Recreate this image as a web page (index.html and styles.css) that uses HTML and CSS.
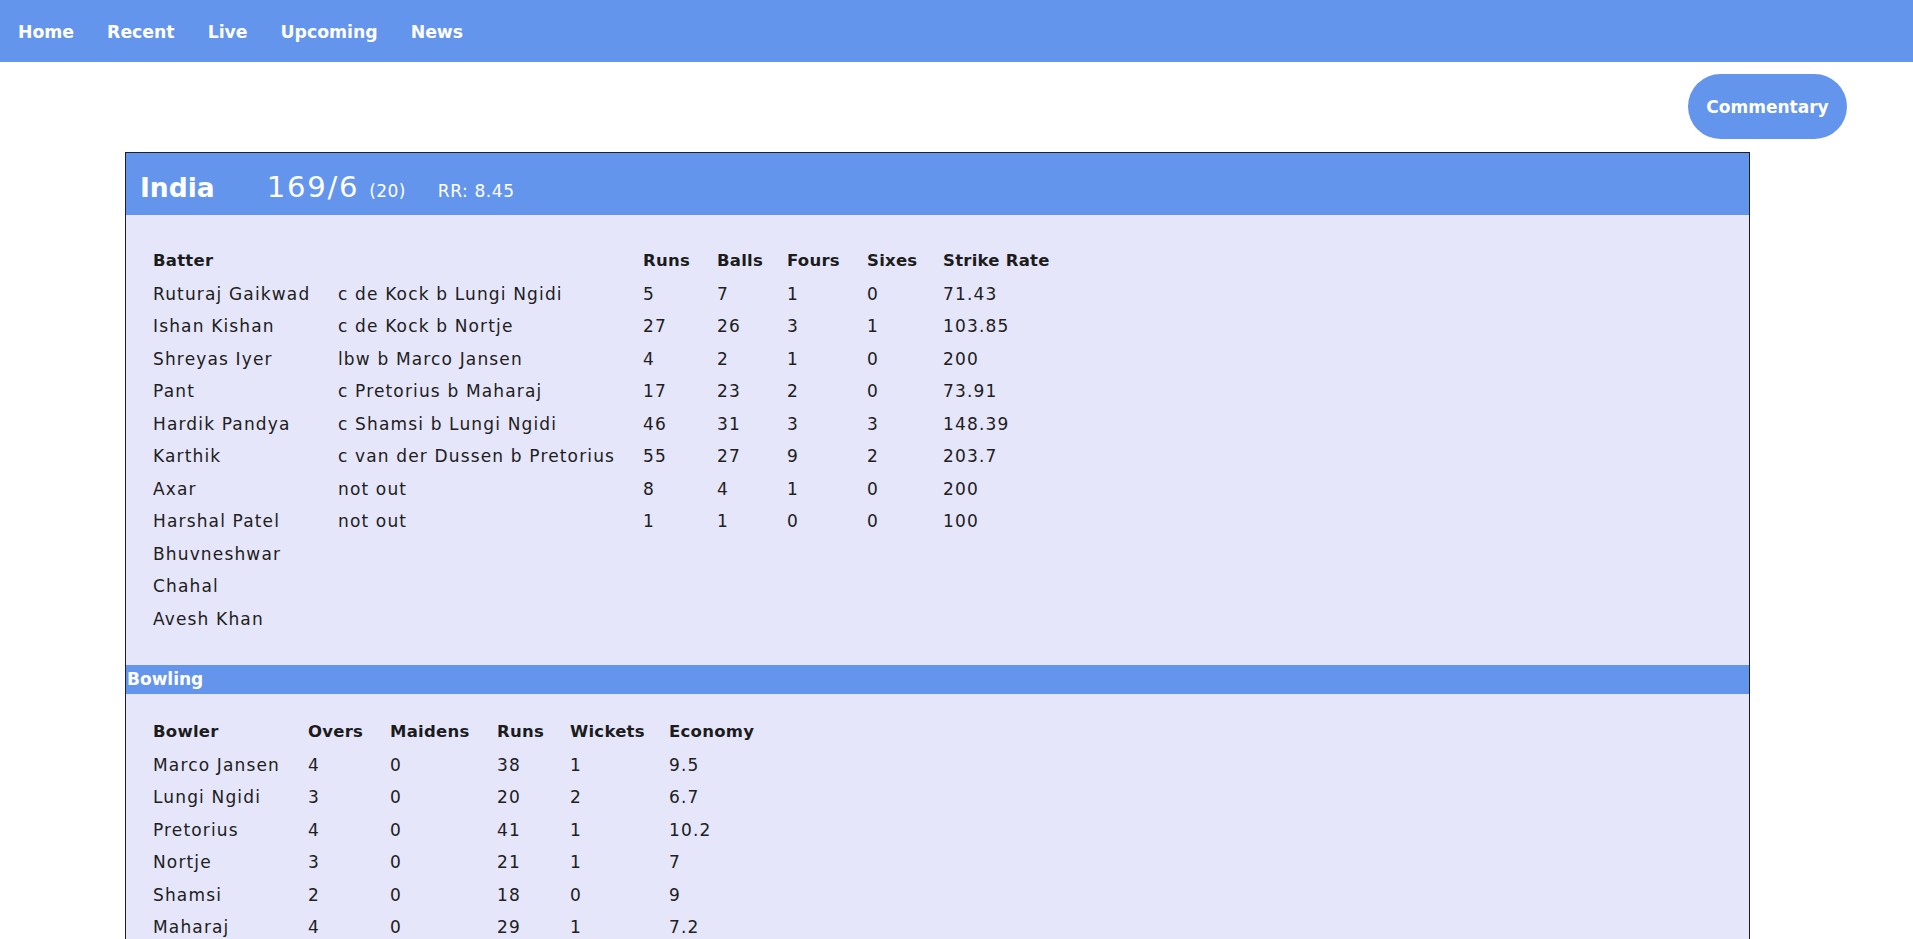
FILE: index.html
```html
<!DOCTYPE html>
<html>
<head>
<meta charset="utf-8">
<title>Scorecard</title>
<link rel="stylesheet" href="styles.css">
</head>
<body>
<nav class="nav">
  <a class="nav-link" href="#">Home</a>
  <a class="nav-link" href="#">Recent</a>
  <a class="nav-link" href="#">Live</a>
  <a class="nav-link" href="#">Upcoming</a>
  <a class="nav-link" href="#">News</a>
</nav>
<div class="actions">
  <button class="commentary-btn">Commentary</button>
</div>
<section class="card">
  <header class="card-head">
    <span class="team">India</span>
    <span class="score">169/6</span>
    <span class="overs">(20)</span>
    <span class="rr">RR: 8.45</span>
  </header>
  <div class="batting">
    <table class="stats bat">
      <colgroup>
        <col class="c-name"><col class="c-dis"><col class="c-runs"><col class="c-balls"><col class="c-fours"><col class="c-sixes"><col class="c-sr">
      </colgroup>
      <thead>
        <tr><th>Batter</th><th></th><th>Runs</th><th>Balls</th><th>Fours</th><th>Sixes</th><th>Strike Rate</th></tr>
      </thead>
      <tbody>
        <tr><td>Ruturaj Gaikwad</td><td>c de Kock b Lungi Ngidi</td><td>5</td><td>7</td><td>1</td><td>0</td><td>71.43</td></tr>
        <tr><td>Ishan Kishan</td><td>c de Kock b Nortje</td><td>27</td><td>26</td><td>3</td><td>1</td><td>103.85</td></tr>
        <tr><td>Shreyas Iyer</td><td>lbw b Marco Jansen</td><td>4</td><td>2</td><td>1</td><td>0</td><td>200</td></tr>
        <tr><td>Pant</td><td>c Pretorius b Maharaj</td><td>17</td><td>23</td><td>2</td><td>0</td><td>73.91</td></tr>
        <tr><td>Hardik Pandya</td><td>c Shamsi b Lungi Ngidi</td><td>46</td><td>31</td><td>3</td><td>3</td><td>148.39</td></tr>
        <tr><td>Karthik</td><td>c van der Dussen b Pretorius</td><td>55</td><td>27</td><td>9</td><td>2</td><td>203.7</td></tr>
        <tr><td>Axar</td><td>not out</td><td>8</td><td>4</td><td>1</td><td>0</td><td>200</td></tr>
        <tr><td>Harshal Patel</td><td>not out</td><td>1</td><td>1</td><td>0</td><td>0</td><td>100</td></tr>
        <tr><td>Bhuvneshwar</td><td></td><td></td><td></td><td></td><td></td><td></td></tr>
        <tr><td>Chahal</td><td></td><td></td><td></td><td></td><td></td><td></td></tr>
        <tr><td>Avesh Khan</td><td></td><td></td><td></td><td></td><td></td><td></td></tr>
      </tbody>
    </table>
  </div>
  <div class="band">Bowling</div>
  <div class="bowling">
    <table class="stats bowl">
      <colgroup>
        <col class="b-name"><col class="b-overs"><col class="b-maidens"><col class="b-runs"><col class="b-wkts"><col class="b-eco">
      </colgroup>
      <thead>
        <tr><th>Bowler</th><th>Overs</th><th>Maidens</th><th>Runs</th><th>Wickets</th><th>Economy</th></tr>
      </thead>
      <tbody>
        <tr><td>Marco Jansen</td><td>4</td><td>0</td><td>38</td><td>1</td><td>9.5</td></tr>
        <tr><td>Lungi Ngidi</td><td>3</td><td>0</td><td>20</td><td>2</td><td>6.7</td></tr>
        <tr><td>Pretorius</td><td>4</td><td>0</td><td>41</td><td>1</td><td>10.2</td></tr>
        <tr><td>Nortje</td><td>3</td><td>0</td><td>21</td><td>1</td><td>7</td></tr>
        <tr><td>Shamsi</td><td>2</td><td>0</td><td>18</td><td>0</td><td>9</td></tr>
        <tr><td>Maharaj</td><td>4</td><td>0</td><td>29</td><td>1</td><td>7.2</td></tr>
      </tbody>
    </table>
  </div>
</section>
</body>
</html>
```

FILE: styles.css
```css
* { box-sizing: border-box; }

body {
  margin: 0;
  background: #ffffff;
  font-family: "DejaVu Sans", Verdana, sans-serif;
  color: #1c1c1c;
}

.nav {
  display: flex;
  align-items: center;
  gap: 33px;
  height: 62px;
  padding: 1px 0 0 18px;
  background: #6495ed;
}

.nav-link {
  color: #ffffff;
  text-decoration: none;
  font-weight: bold;
  font-size: 17.3px;
}

.actions {
  display: flex;
  justify-content: flex-end;
  padding: 12px 66px 13px 0;
}

.commentary-btn {
  width: 159px;
  height: 65px;
  border: none;
  border-radius: 33px;
  background: #6495ed;
  color: #ffffff;
  font-family: "DejaVu Sans", Verdana, sans-serif;
  font-weight: bold;
  font-size: 17px;
  padding: 0;
}

.card {
  margin-left: 125px;
  width: 1625px;
  border: 1px solid #1e1e2a;
  background: #e6e6fa;
}

.card-head {
  display: flex;
  align-items: baseline;
  height: 62px;
  padding: 17px 0 0 14px;
  background: #6495ed;
  color: #ffffff;
}

.team {
  font-weight: bold;
  font-size: 26.5px;
  margin-right: 52px;
}

.score {
  font-size: 29px;
  letter-spacing: 1.8px;
  margin-right: 10px;
}

.overs {
  font-size: 17px;
  letter-spacing: 0.4px;
  margin-right: 32px;
}

.rr {
  font-size: 17px;
  letter-spacing: 0.6px;
}

.batting {
  padding: 30px 0 30px 27px;
}

.bowling {
  padding: 22px 0 0 27px;
}

.stats {
  border-collapse: collapse;
  table-layout: fixed;
}

.stats th,
.stats td {
  padding: 6px 0;
  line-height: 20.5px;
  text-align: left;
  white-space: nowrap;
}

.stats th {
  font-weight: bold;
  font-size: 16.5px;
  letter-spacing: 0.25px;
}

.stats td {
  font-size: 17px;
  letter-spacing: 1.15px;
  color: #202020;
}

.bat { width: 890px; }
.c-name { width: 185px; }
.c-dis { width: 305px; }
.c-runs { width: 74px; }
.c-balls { width: 70px; }
.c-fours { width: 80px; }
.c-sixes { width: 76px; }
.c-sr { width: 100px; }

.bowl { width: 620px; }
.b-name { width: 155px; }
.b-overs { width: 82px; }
.b-maidens { width: 107px; }
.b-runs { width: 73px; }
.b-wkts { width: 99px; }
.b-eco { width: 104px; }

.band {
  height: 29px;
  padding: 4px 0 0 1px;
  background: #6495ed;
  color: #ffffff;
  font-weight: bold;
  font-size: 17px;
}
```
